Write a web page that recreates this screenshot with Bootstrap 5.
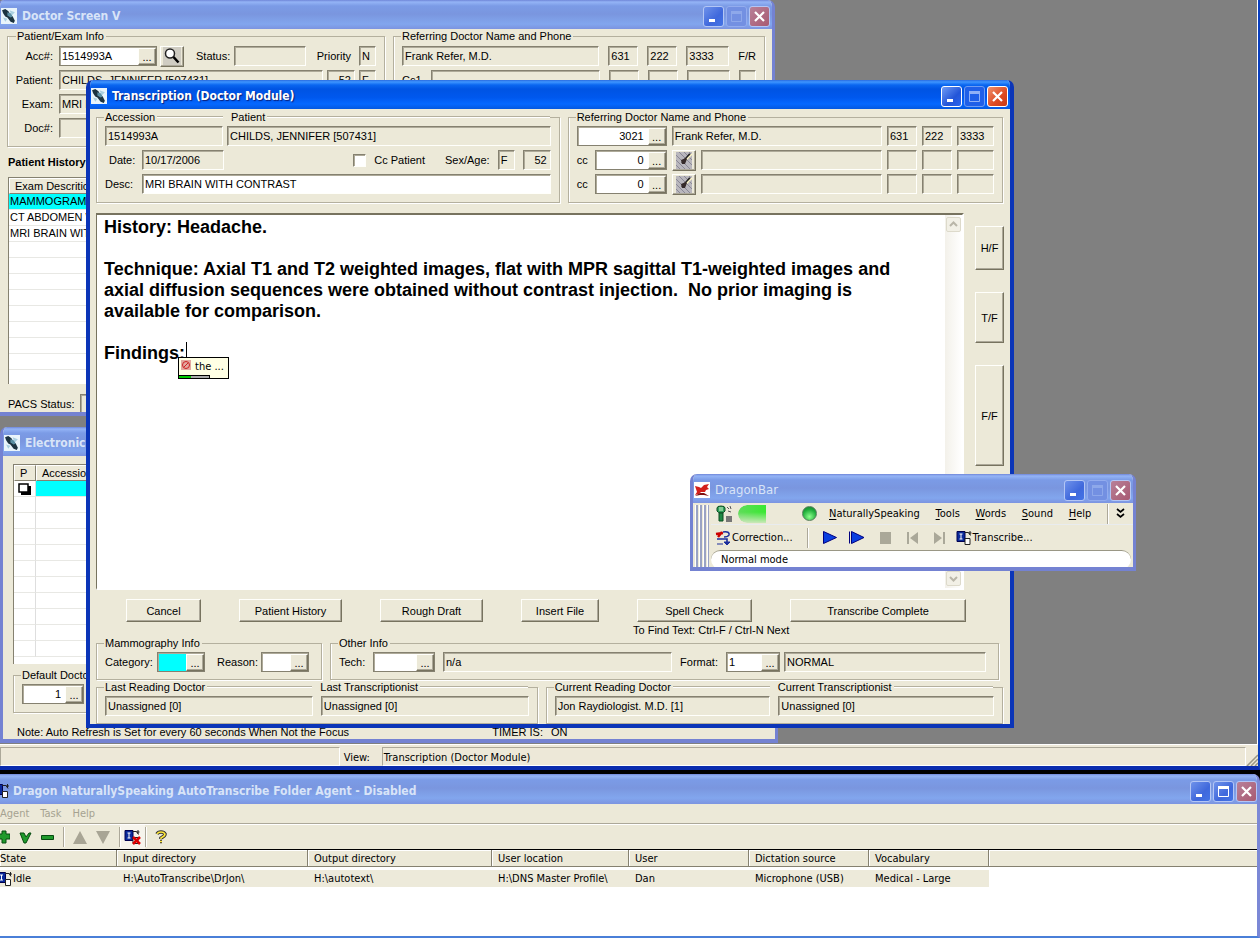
<!DOCTYPE html>
<html lang="en">
<head>
<meta charset="utf-8">
<meta name="viewport" content="width=device-width, initial-scale=1">
<title>Transcription (Doctor Module)</title>
<link rel="stylesheet" href="https://cdn.jsdelivr.net/npm/bootstrap@5.3.0/dist/css/bootstrap.min.css">
<style>
:root{--face:#ece9d8;--lo:#858170;--hi:#fffffb}
html,body{height:100%}
body{font:11px/14px "Liberation Sans",Arial,sans-serif;color:#000;background:#000;overflow:hidden;cursor:default}
.ui{font-family:"DejaVu Sans Condensed",Tahoma,sans-serif}
input,button,textarea{font:inherit;color:inherit;border-radius:0}
label{white-space:nowrap}
svg{display:block;flex:none}

/* windows */
.workspace{border-right:2px solid #0a3fc0;border-bottom:4px solid #0a2cae;margin-bottom:4px}
.mdi{background:#808080;border-right:1px solid #fff}
.win{position:absolute;background:var(--face);border:4px solid #0b35b8;border-top:0;border-radius:7px 7px 0 0;display:flex;flex-direction:column;overflow:hidden}
.win.idle{border-color:#7482d2;border-width:0 3px 4px}
.win-doctor{left:-3px;top:0;width:778px;height:416px}
.win-electronic{left:0;top:427px;width:778px;height:316px}
.win-transcription{left:86px;top:80px;width:928px;height:648px}
.win-dragon{left:690px;top:474px;width:446px;height:97px}
.tbar{height:29px;flex:none;margin:0 -4px;padding:3px 6px 0 5px;color:#fff;gap:5px;background:linear-gradient(#2a6be0 0,#3e95ff 2px,#0a66f0 5px,#0054e3 9px,#0058ee 60%,#0568ff 24px,#0458e0 100%)}
.idle>.tbar{color:#d8e4f8;background:linear-gradient(#6f86d8 0,#94b4f6 2px,#7b9be6 6px,#7a96df 14px,#82a6ee 24px,#7c94e0 100%)}
.tbar h2{font:bold 12px/18px "DejaVu Sans Condensed","Trebuchet MS",sans-serif;margin:0;flex:1;white-space:nowrap;text-shadow:1px 1px 1px #0a1f7a}
.idle>.tbar h2{text-shadow:none}
.win-dragon .tbar h2{font-size:13px;font-weight:400}
.cap{width:21px;height:21px;flex:none;padding:0;border:1px solid #fff;border-radius:3px;background:linear-gradient(135deg,#6f9bf5,#2355d8 60%,#2c66ee);display:grid;place-items:center;margin-left:-3px}
.cap.off{background:#1f5fe8;border-color:#6f9cf2}
.cap.close-x{background:linear-gradient(135deg,#f0906c,#dc4a22 60%,#c83a14)}
.idle .cap{border-color:#b3c6f5;background:linear-gradient(135deg,#6f92ea,#3f68dc 60%,#4474e6)}
.idle .cap.off{background:#7390e2;border-color:#93acee}
.idle .cap.close-x{background:linear-gradient(135deg,#b88098,#a85a72)}

/* controls */
.inp{height:20px;min-width:0;padding:0 3px 1px 2px;border:1px solid;border-color:var(--lo) var(--hi) var(--hi) var(--lo);box-shadow:inset 1px 1px #aeaa99;background:var(--face);outline:0}
.edit{background:#fff}
.cyan{background:#0ff}
.combo{display:flex;height:20px;border:1px solid;border-color:var(--lo);box-shadow:inset 1px 1px #aeaa99;background:#fff;padding:1px 0 0 1px}
.combo input{flex:1;min-width:0;border:0;padding:0 4px 2px 1px;background:transparent;outline:0}
.combo.cyan input{background:#0ff}
.raised{background:var(--face);border:1px solid;border-color:var(--hi) #77735f #77735f var(--hi);box-shadow:inset -1px -1px #aca899;padding:0}
.dots{width:18px;line-height:12px}
.push{height:23px}
.icon-btn{width:24px;height:21px;display:grid;place-items:center}
.grp{border:1px solid #b4b09e;box-shadow:inset 1px 0 #fff,1px 1px #fff;margin:0;padding:2px 8px 8px;min-width:0}
.grp legend{float:none;width:auto;font:inherit;line-height:14px;margin:0 0 0 -1px;padding:0 2px 0 1px;display:flex;align-items:center}
.grp legend.split{width:100%;padding:0 0 0 1px;gap:8px}
.split>span{display:flex;align-items:center}
.split>span.half{flex:1 1 0}
.rule{flex:1;height:2px;border-top:1px solid #b4b09e;border-bottom:1px solid #fff;margin-left:2px}
.rows{display:flex;flex-direction:column;gap:4px}
.line{display:flex;align-items:center;height:20px}
.near{gap:5px}
.apart{gap:9px}
.rt{text-align:right}
.w13{width:13px}.w17{width:17px}.w28{width:28px}.w30{width:30px}.w34{width:34px}.w37{width:37px}.w43{width:43px}.w48{width:48px}.w52{width:52px}.w54{width:54px}.w72{width:72px}
.w62{width:62px}.w82{width:82px}.w90{width:90px}.w98{width:98px}.w118{width:118px}
.tick{appearance:none;width:13px;height:13px;margin:0;background:#fff;border:1px solid;border-color:var(--lo) var(--hi) var(--hi) var(--lo);box-shadow:inset 1px 1px #aeaa99}

/* doctor and queue windows */
.doc-head{padding-left:7px;padding-right:7px}
.doc-head .grp{padding-top:3px}
.patient-box{flex:0 0 378px;padding-left:4px}
.doc-head .combo+button{margin-left:3px}
.tag{width:47px;padding-right:6px;text-align:right}
.exams{height:209px}
.queue{padding:8px 8px 0 10px}
.timer{width:224px}

/* transcription window */
.trans{padding:1px 7px 0 6px;display:flex;flex-direction:column;flex:1}
.accession-box{flex:1 1 0}
.referring-box{flex:0 0 48%}
.report{margin-top:10px}
.editor{position:relative;height:377px;flex:1;display:flex;border:2px solid;border-color:#77735f #fff #fff #77735f;border-left-width:1px;background:#fff}
.editor textarea{flex:1;border:0;outline:0;resize:none;overflow:hidden;padding:2px 7px;font:bold 18px/21px "Liberation Sans",Arial,sans-serif;white-space:pre-wrap}
.scroll{width:17px;background:linear-gradient(90deg,#f3f1ea,#fff);display:flex;flex-direction:column;justify-content:space-between;align-items:center;padding:2px 0}
.scroll button{width:15px;height:15px;padding:0;border:1px solid #dddacb;background:#f2f0e6;border-radius:2px;display:grid;place-items:center}
.caret{position:absolute;left:89px;top:127px;width:1px;height:17px;background:#000}
.hint{position:absolute;left:81px;top:142px;width:51px;height:22px;background:#ffffe4;border:1px solid #000;display:flex;gap:4px;padding:2px 0 0 2px}
.hint progress{position:absolute;left:-1px;bottom:-1px;width:32px;height:4px;border:1px solid #000;appearance:none;background:#aaa}
.hint progress::-webkit-progress-bar{background:#aaa}
.hint progress::-webkit-progress-value{background:#0c0}
.side{width:39px;padding:13px 0 0 11px;display:flex;flex-direction:column;gap:22px}
.side .raised{width:29px}
.hf{height:44px}.tf{height:51px}.ff{height:101px}
.cmds{display:grid;grid-template-columns:75px 103px 103px 78px 115px 176px;column-gap:38px;padding:9px 0 0 30px}
.find{grid-column:5/7;margin:0 0 -3px -4px;line-height:17px}
.lower .grp{padding-bottom:7px}
.last-box{flex:27 1 0}
.current-box{flex:28 1 0}
.fmt{width:202px}

/* lists */
.grid{background:#fff;border-top:1px solid var(--lo);border-left:1px solid var(--lo)}
.grid table,.agent table{border-collapse:separate;border-spacing:0;width:100%;table-layout:fixed}
.grid th{font-weight:400;height:16px;background:var(--face);border:1px solid;border-color:#fff #858170 #858170 #fff;padding:0 0 0 5px;line-height:14px}
.grid td{height:16px;border-bottom:1px solid #e8e8e4;border-right:1px solid #dedede;padding:0 1px;line-height:15px;white-space:nowrap}

/* DragonBar */
.grip{width:14px;flex:none;margin:2px 2px;background:repeating-linear-gradient(90deg,#fff 0 1px,#9aa3c4 1px 3px,var(--face) 3px 4px)}
.dmenu{height:22px}
.dtools{height:25px;gap:10px}
.dmenu a,.amenu a{color:inherit;text-decoration:none}
.dmenu u{text-underline-offset:2px}
.level{width:60px;height:18px;border-radius:9px 0 9px 9px;background:linear-gradient(90deg,#5fdc5a,#3ae832 28px,transparent 28px);mask-image:linear-gradient(#000 40%,#0003)}
.lamp{width:15px;height:15px;border-radius:50%;background:radial-gradient(circle at 50% 75%,#8dff8d,#1fae3a 60%,#157a30);border:1px solid #567f5c}
.flat{border:0;background:none;padding:0;display:flex;align-items:center}
.mode{height:19px;border:0;border-top:1px solid #9a9785;border-radius:10px;padding:0 10px 2px;background:#fff;margin-right:2px;outline:0}

/* status bar and folder agent */
.status{height:22px;flex:none;background:#ede8d8;border-top:1px solid #fff;padding-top:2px}
.pane{height:19px;border:1px solid;border-color:#aca899 #fff #fff #aca899;padding:3px 1px 0}
.pane-a{flex:0 0 27%}
.agent{position:relative;flex:none;height:164px;background:#fff;border-bottom:2px solid #4a7fd8;border-right:3px solid #7b88d6;border-radius:0 7px 0 0;overflow:hidden}
.agent>.tbar{height:30px;margin:0 -3px 0 0;padding:4px 3px 0 0;gap:3px;color:#d8e4f8}
.agent .caps{gap:2px}
.agent .cap{margin-left:0}
.amenu{height:20px;background:var(--face);color:#a5a291;border-bottom:1px solid #aca899;gap:11px}
.tools{height:26px;background:var(--face);border-top:1px solid #fff;border-bottom:1px solid #000}
.sep{width:1px;height:20px;background:#aca899;box-shadow:1px 0 #fff}
.agent th{font-weight:400;height:17px;background:var(--face);border-bottom:1px solid #858170;border-right:1px solid #858170;box-shadow:inset 1px 1px #fff;padding:1px 6px 0;line-height:15px}
.agent td{height:17px;background:#edeada;padding:0 6px;white-space:nowrap}
.agent tbody::before{content:"";display:block;height:3px}
.agent tr>*:first-child{padding-left:0}
.agent th:last-child{border-right:0}
.agent td:last-child{background:#fff}
</style>
</head>
<body class="d-flex flex-column">

<svg width="0" height="0" class="position-absolute" aria-hidden="true">
  <symbol id="app" viewBox="0 0 15 15"><path fill="#e9f4fb" d="M0 0h15v15H0z"/><path fill="#a9cfe0" d="M8 2l5 2-3 3zM2 9l4 1-2 3z"/><path d="M1 2l3-1 3 2 1 2 3 3 2 4-1 2-3-1-3-4-2-1-2-3z" fill="#1c3340"/><path d="M6 4l3 1 2 3-2 1-3-2z" fill="#5a8ea2"/></symbol>
  <symbol id="min" viewBox="0 0 15 15"><path d="M3 10h6v3H3z" fill="#fff"/></symbol>
  <symbol id="max" viewBox="0 0 15 15"><path d="M2.500 4h10v8.500h-10z" fill="none" stroke="currentColor"/><path d="M2 2h11v3H2z" fill="currentColor"/></symbol>
  <symbol id="cls" viewBox="0 0 15 15"><path d="M3 3l9 9M12 3l-9 9" stroke="#fff" stroke-width="2.200"/></symbol>
  <symbol id="wand" viewBox="0 0 18 17"><path fill="#b9b7bd" d="M1 0h16v17H1z"/><path d="M1 3l14 14M1 8l9 9M1 13l4 4M4 0l13 13M9 0l8 8M14 0l3 3" stroke="#8a8896"/><path d="M7 11L15 2" stroke="#222" stroke-width="2"/><path d="M11 8l6-6" stroke="#fff8c8" stroke-width="1.500"/><path d="M6 8l5-2 1 1-2 5-3 0z" fill="#352a2a"/></symbol>
  <symbol id="book" viewBox="0 0 16 16"><path d="M.500 1.500h8v10h-8z" fill="#0a2a9a" stroke="#000050"/><path d="M3 4h3M3 9h3M4.500 4v5" stroke="#fff"/><path d="M8 2.500h4l2 3" fill="none" stroke="#222"/><path d="M12 3l3 0M13.500 1v4" stroke="#222"/><path d="M8.500 8.500h5v6h-5z" fill="#fff" stroke="#222"/></symbol>
  <symbol id="up" viewBox="0 0 13 13"><path d="M3 8l3.500-3.500L10 8" fill="none" stroke="#b9b6a8" stroke-width="2"/></symbol>
  <symbol id="down" viewBox="0 0 13 13"><path d="M3 5l3.500 3.500L10 5" fill="none" stroke="#b9b6a8" stroke-width="2"/></symbol>
</svg>

<main class="workspace flex-fill d-flex flex-column position-relative">
<div class="mdi flex-fill position-relative overflow-hidden">

  <!-- Doctor Screen -->
  <section class="win idle win-doctor">
    <header class="tbar d-flex align-items-center"><svg width="16" height="16"><use href="#app"/></svg><h2>Doctor Screen V</h2>
      <button class="cap" aria-label="Minimize"><svg width="15" height="15"><use href="#min"/></svg></button><button class="cap off" aria-label="Maximize"><svg width="15" height="15" color="#8ea8ea"><use href="#max"/></svg></button><button class="cap close-x" aria-label="Close"><svg width="15" height="15"><use href="#cls"/></svg></button>
    </header>
    <div class="doc-head d-flex gap-2">
      <fieldset class="grp patient-box"><legend class="ms-1">Patient/Exam Info</legend>
        <div class="rows">
          <div class="line"><label class="tag" for="acc">Acc#:</label><div class="combo w98"><input id="acc" value="1514993A"><button class="raised dots" aria-label="Browse accession">...</button></div>
            <button class="raised icon-btn" aria-label="Search"><svg width="18" height="18" viewBox="0 0 18 18"><path fill="#cfccc2" d="M0 0h18v18H0z"/><circle cx="7" cy="6.500" r="4.500" fill="#fff" stroke="#222" stroke-width="1.500"/><path d="M10.500 10l5 5.500" stroke="#000" stroke-width="2.500"/></svg></button>
            <label class="ms-2 ps-1" for="st">Status:</label><input id="st" class="inp w72 ms-1" readonly><label class="ms-auto pe-1" for="pr">Priority</label><input id="pr" class="inp w17 ms-1" value="N" readonly></div>
          <div class="line"><label class="tag" for="pt">Patient:</label><input id="pt" class="inp flex-fill" value="CHILDS, JENNIFER [507431]" readonly><input class="inp w28 rt ms-1" value="52" aria-label="Age" readonly><input class="inp w17 ms-1" value="F" aria-label="Sex" readonly></div>
          <div class="line"><label class="tag" for="ex">Exam:</label><input id="ex" class="inp flex-fill" value="MRI BRAIN WITH CONTRAST" readonly></div>
          <div class="line"><label class="tag" for="dc">Doc#:</label><input id="dc" class="inp flex-fill" readonly></div>
        </div>
      </fieldset>
      <fieldset class="grp flex-fill"><legend>Referring Doctor Name and Phone</legend>
        <div class="rows">
          <div class="line apart"><input class="inp w-auto flex-fill" value="Frank Refer, M.D." aria-label="Doctor" readonly><input class="inp w30" value="631" aria-label="Area" readonly><input class="inp w30" value="222" aria-label="Exchange" readonly><input class="inp w43" value="3333" aria-label="Number" readonly><span>F/R</span></div>
          <div class="line apart"><label for="cc1">Cc1</label><input id="cc1" class="inp w-auto flex-fill" readonly><input class="inp w30" aria-label="Cc area" readonly><input class="inp w30" aria-label="Cc exchange" readonly><input class="inp w43" aria-label="Cc number" readonly><input class="inp w17" aria-label="Cc F/R" readonly></div>
        </div>
      </fieldset>
    </div>
    <div class="ps-2 pt-2 fw-bold">Patient History</div>
    <div class="grid exams ms-2 mt-2">
      <table><thead><tr><th>Exam Descrition</th></tr></thead>
      <tbody><tr><td class="cyan">MAMMOGRAM</td></tr><tr><td>CT ABDOMEN WITH</td></tr><tr><td>MRI BRAIN WITH CONTRAST</td></tr><tr><td></td></tr><tr><td></td></tr><tr><td></td></tr><tr><td></td></tr><tr><td></td></tr><tr><td></td></tr><tr><td></td></tr><tr><td></td></tr></tbody></table>
    </div>
    <div class="line ps-2 mt-2 pt-1"><label class="w72" for="pacs">PACS Status:</label><input id="pacs" class="inp" readonly></div>
  </section>

  <!-- Electronic queue -->
  <section class="win idle win-electronic">
    <header class="tbar d-flex align-items-center"><svg width="16" height="16"><use href="#app"/></svg><h2>Electronic Signature</h2></header>
    <div class="queue d-flex flex-column flex-fill">
      <div class="grid flex-fill">
        <table><colgroup><col width="22"><col></colgroup><thead><tr><th>P</th><th>Accession</th></tr></thead>
        <tbody><tr><td><svg class="mx-auto" width="13" height="12"><path d="M3 3h10v9H3z"/><path d="M1 1h9v8H1z" fill="#fff" stroke="#000" stroke-width="1.500"/></svg></td><td class="cyan"></td></tr><tr><td></td><td></td></tr><tr><td></td><td></td></tr><tr><td></td><td></td></tr><tr><td></td><td></td></tr><tr><td></td><td></td></tr><tr><td></td><td></td></tr><tr><td></td><td></td></tr><tr><td></td><td></td></tr><tr><td></td><td></td></tr><tr><td></td><td></td></tr></tbody></table>
      </div>
      <fieldset class="grp w-25 mt-1"><legend>Default Doctor</legend><div class="line"><div class="combo w62"><input class="rt" value="1" aria-label="Default doctor"><button class="raised dots" aria-label="Browse doctors">...</button></div></div></fieldset>
      <div class="d-flex pt-1 mt-2 ps-1"><span class="flex-fill">Note: Auto Refresh is Set for every 60 seconds When Not the Focus</span><span>TIMER IS:</span><span class="timer ps-2">ON</span></div>
    </div>
  </section>

  <!-- Transcription -->
  <section class="win win-transcription">
    <header class="tbar d-flex align-items-center"><svg width="16" height="16"><use href="#app"/></svg><h2>Transcription (Doctor Module)</h2>
      <button class="cap" aria-label="Minimize"><svg width="15" height="15"><use href="#min"/></svg></button><button class="cap off" aria-label="Maximize"><svg width="15" height="15" color="#8fb0f6"><use href="#max"/></svg></button><button class="cap close-x" aria-label="Close"><svg width="15" height="15"><use href="#cls"/></svg></button>
    </header>
    <div class="trans">
      <div class="d-flex gap-2">
        <fieldset class="grp accession-box"><legend class="split"><span class="w118">Accession<i class="rule"></i></span><span class="flex-fill">Patient<i class="rule"></i></span></legend>
          <div class="rows">
            <div class="line gap-1"><input class="inp w118" value="1514993A" aria-label="Accession" readonly><input class="inp flex-fill" value="CHILDS, JENNIFER [507431]" aria-label="Patient" readonly></div>
            <div class="line"><label class="w37 ps-1" for="dt">Date:</label><input id="dt" class="inp w82" value="10/17/2006" readonly><input type="checkbox" class="tick ms-auto" id="ccp"><label class="ps-2" for="ccp">Cc Patient</label><label class="ps-3 ms-1" for="sx">Sex/Age:</label><input id="sx" class="inp w17 ms-2" value="F" readonly><input class="inp w28 rt ms-2" value="52" aria-label="Age" readonly></div>
            <div class="line"><label class="w37" for="ds">Desc:</label><input id="ds" class="inp edit flex-fill" value="MRI BRAIN WITH CONTRAST"></div>
          </div>
        </fieldset>
        <fieldset class="grp referring-box"><legend>Referring Doctor Name and Phone</legend>
          <div class="rows">
            <div class="line near"><div class="combo w90"><input class="rt" value="3021" aria-label="Doctor number"><button class="raised dots" aria-label="Browse">...</button></div><input class="inp flex-fill" value="Frank Refer, M.D." aria-label="Doctor name" readonly><input class="inp w30" value="631" aria-label="Area" readonly><input class="inp w30" value="222" aria-label="Exchange" readonly><input class="inp w37" value="3333" aria-label="Number" readonly></div>
            <div class="line near"><label class="w13" for="c1">cc</label><div class="combo w72"><input id="c1" class="rt" value="0"><button class="raised dots" aria-label="Browse">...</button></div><button class="raised icon-btn" aria-label="Clear"><svg width="18" height="17"><use href="#wand"/></svg></button><input class="inp flex-fill" aria-label="Copy name" readonly><input class="inp w30" aria-label="Area" readonly><input class="inp w30" aria-label="Exchange" readonly><input class="inp w37" aria-label="Number" readonly></div>
            <div class="line near"><label class="w13" for="c2">cc</label><div class="combo w72"><input id="c2" class="rt" value="0"><button class="raised dots" aria-label="Browse">...</button></div><button class="raised icon-btn" aria-label="Clear"><svg width="18" height="17"><use href="#wand"/></svg></button><input class="inp flex-fill" aria-label="Copy name" readonly><input class="inp w30" aria-label="Area" readonly><input class="inp w30" aria-label="Exchange" readonly><input class="inp w37" aria-label="Number" readonly></div>
          </div>
        </fieldset>
      </div>

      <div class="d-flex report">
        <div class="editor">
          <textarea aria-label="Report" spellcheck="false">History: Headache.

Technique: Axial T1 and T2 weighted images, flat with MPR sagittal T1-weighted images and
axial diffusion sequences were obtained without contrast injection.  No prior imaging is
available for comparison.

Findings:</textarea>
          <div class="scroll"><button aria-label="Scroll up"><svg width="13" height="13"><use href="#up"/></svg></button><button aria-label="Scroll down"><svg width="13" height="13"><use href="#down"/></svg></button></div>
          <i class="caret"></i>
          <div class="hint ui"><svg width="10" height="10"><path fill="#e4a8a0" d="M0 0h10v10H0z"/><circle cx="5" cy="5" r="3.500" fill="none" stroke="#c22"/><path d="M3 7l4-4" stroke="#c22"/></svg><span>the ...</span><progress value="40" max="100"></progress></div>
        </div>
        <div class="side"><button class="raised hf">H/F</button><button class="raised tf">T/F</button><button class="raised ff">F/F</button></div>
      </div>

      <div class="cmds">
        <button class="raised push">Cancel</button><button class="raised push">Patient History</button><button class="raised push">Rough Draft</button><button class="raised push">Insert File</button><button class="raised push">Spell Check</button><button class="raised push">Transcribe Complete</button>
        <span class="find">To Find Text: Ctrl-F / Ctrl-N Next</span>
      </div>

      <div class="d-flex gap-2 me-1 lower">
        <fieldset class="grp"><legend>Mammography Info</legend><div class="line"><label class="w52" for="cat">Category:</label><div class="combo cyan w48"><input id="cat"><button class="raised dots" aria-label="Browse">...</button></div><label class="w48 ms-2 ps-1" for="rs">Reason:</label><div class="combo w48 me-1"><input id="rs"><button class="raised dots" aria-label="Browse">...</button></div></div></fieldset>
        <fieldset class="grp flex-fill"><legend>Other Info</legend><div class="line"><label class="w34" for="tc">Tech:</label><div class="combo w62"><input id="tc"><button class="raised dots" aria-label="Browse">...</button></div><input class="inp flex-fill mx-2" value="n/a" aria-label="Tech name" readonly><label for="fm">Format:</label><div class="combo w54 ms-2 me-1"><input id="fm" value="1"><button class="raised dots" aria-label="Browse">...</button></div><input class="inp fmt me-1" value="NORMAL" aria-label="Format name" readonly></div></fieldset>
      </div>
      <div class="d-flex gap-2 lower">
        <fieldset class="grp last-box"><legend class="split"><span class="half">Last Reading Doctor<i class="rule"></i></span><span class="half">Last Transcriptionist<i class="rule"></i></span></legend><div class="line gap-2"><input class="inp flex-fill w-50" value="Unassigned [0]" aria-label="Last reading doctor" readonly><input class="inp flex-fill w-50" value="Unassigned [0]" aria-label="Last transcriptionist" readonly></div></fieldset>
        <fieldset class="grp current-box"><legend class="split"><span class="half">Current Reading Doctor<i class="rule"></i></span><span class="half">Current Transcriptionist<i class="rule"></i></span></legend><div class="line gap-2"><input class="inp flex-fill w-50" value="Jon Raydiologist. M.D. [1]" aria-label="Current reading doctor" readonly><input class="inp flex-fill w-50" value="Unassigned [0]" aria-label="Current transcriptionist" readonly></div></fieldset>
      </div>
    </div>
  </section>

  <!-- DragonBar -->
  <section class="win idle win-dragon ui">
    <header class="tbar d-flex align-items-center"><svg width="16" height="16" viewBox="0 0 16 16"><path fill="#fff" d="M0 0h16v16H0z"/><path d="M1 4l4 1 2 1 3-3 5-1-2 3 2 2-3 1-1 2-4 0-2 2-4 1 2-3-1-3z" fill="#d3201c"/><path d="M1 14l5-3 4 0 5 3-5-1-4 0z" fill="#801010"/></svg><h2>DragonBar</h2>
      <button class="cap" aria-label="Minimize"><svg width="15" height="15"><use href="#min"/></svg></button><button class="cap off" aria-label="Maximize"><svg width="15" height="15" color="#8ea8ea"><use href="#max"/></svg></button><button class="cap close-x" aria-label="Close"><svg width="15" height="15"><use href="#cls"/></svg></button>
    </header>
    <div class="d-flex flex-fill">
      <div class="grip"></div>
      <div class="flex-fill d-flex flex-column">
        <nav class="dmenu d-flex align-items-center ps-1 border-bottom border-secondary-subtle">
          <svg width="19" height="18" viewBox="0 0 19 18"><path d="M2 3q0-2 4-2t4 2v3q-1 2-4 2t-4-2z" fill="#2fa05a" stroke="#0a4a20"/><path d="M4 8h4v8H4z" fill="#1f8a45" stroke="#0a4a20"/><path d="M4 3h4M4 5h4" stroke="#d7f7d0"/><path d="M12 2l2 2M15 1l1 3M13 6l3 1" stroke="#555"/><path d="M11 11h6v6h-6z" fill="#777"/></svg>
          <span class="level ms-1"></span><span class="lamp mx-1"></span>
          <div class="d-flex flex-fill justify-content-between align-items-center ps-2"><a href="#"><u>N</u>aturallySpeaking</a><a href="#"><u>T</u>ools</a><a href="#"><u>W</u>ords</a><a href="#"><u>S</u>ound</a><a href="#"><u>H</u>elp</a><i class="sep"></i></div>
          <button class="flat px-2" aria-label="More"><svg width="9" height="11"><path d="M1 1l3.500 3L8 1M1 6l3.500 3L8 6" fill="none" stroke="#000" stroke-width="1.700"/></svg></button>
        </nav>
        <div class="dtools d-flex align-items-center ps-1">
          <button class="flat"><svg width="17" height="16" viewBox="0 0 17 16"><path d="M1 4l7-1M3 7l4-5" stroke="#c00" stroke-width="2.500"/><path d="M8 2q7-1 6 3-1 2-5 2M2 9h10v5" fill="none" stroke="#1c2f9c" stroke-width="1.600"/><path d="M9 12h6l-3 3zM2 14h6" fill="#1c2f9c" stroke="#1c2f9c"/></svg>Correction...</button>
          <i class="sep mx-1"></i>
          <button class="flat" aria-label="Play"><svg width="16" height="15"><path d="M1.500 1.500L14.500 7.500 1.500 13.500z" fill="#0a3fe0" stroke="#000080"/></svg></button>
          <button class="flat" aria-label="Play from start"><svg width="17" height="15"><path d="M1.500 1.500v12M3.500 1.500L16 7.500 3.500 13.500z" fill="#0a3fe0" stroke="#000080"/></svg></button>
          <button class="flat ms-1" aria-label="Stop"><svg width="13" height="13"><path fill="#aaa899" d="M1 1h11v12H1z"/></svg></button>
          <button class="flat ms-1" aria-label="Back"><svg width="13" height="14"><path fill="#aaa899" d="M1 1h2v12H1zM12 1v12L4 7z"/></svg></button>
          <button class="flat ms-1" aria-label="Forward"><svg width="13" height="14"><path fill="#aaa899" d="M10 1h2v12h-2zM1 1v12l8-6z"/></svg></button>
          <button class="flat"><svg width="17" height="16"><use href="#book"/></svg>Transcribe...</button>
        </div>
        <input class="mode" value="Normal mode" aria-label="Mode" readonly>
      </div>
    </div>
  </section>
</div>

<footer class="status d-flex align-items-start ui">
  <div class="pane pane-a"></div><span class="px-1 pt-1">View:</span><div class="pane flex-fill ms-2">Transcription (Doctor Module)</div>
  <svg class="align-self-end" width="12" height="12"><path d="M1 12L12 1M5 12l7-7M9 12l3-3" stroke="#9a9785" stroke-width="1.500"/></svg>
</footer>
</main>

<!-- AutoTranscribe agent -->
<section class="agent idle ui">
  <header class="tbar d-flex align-items-center"><svg width="10" height="16" viewBox="6 0 10 16"><use href="#book" width="16" height="16"/></svg><h2>Dragon NaturallySpeaking AutoTranscribe Folder Agent - Disabled</h2>
    <div class="d-flex caps"><button class="cap" aria-label="Minimize"><svg width="15" height="15"><use href="#min"/></svg></button><button class="cap" aria-label="Maximize"><svg width="15" height="15" color="#fff"><use href="#max"/></svg></button><button class="cap close-x" aria-label="Close"><svg width="15" height="15"><use href="#cls"/></svg></button></div>
  </header>
  <nav class="amenu d-flex align-items-center"><a href="#">Agent</a><a href="#">Task</a><a href="#">Help</a></nav>
  <div class="tools apart d-flex align-items-center">
    <button class="flat" aria-label="Add"><svg width="10" height="14"><path d="M-2 4h4V1h4v3h4v5H6v4H2V9h-4z" fill="#1f9a2c" stroke="#064a10"/></svg></button>
    <button class="flat" aria-label="Check"><svg width="13" height="13"><path d="M1 2h4l2 4 3-4h2L7 12H5z" fill="#1f9a2c" stroke="#064a10"/></svg></button>
    <button class="flat" aria-label="Remove"><svg width="13" height="12"><path d="M.500 4.500h12v4H.500z" fill="#1f9a2c" stroke="#064a10"/></svg></button>
    <i class="sep"></i>
    <button class="flat" aria-label="Up"><svg width="14" height="13"><path d="M7 0l7 13H0z" fill="#a8a595"/></svg></button>
    <button class="flat" aria-label="Down"><svg width="14" height="13"><path d="M7 13l7-13H0z" fill="#a8a595"/></svg></button>
    <div class="d-flex align-items-center">
      <i class="sep"></i>
      <button class="flat bg-white bg-opacity-50 p-1" aria-label="Disable"><svg width="17" height="16"><use href="#book"/><path d="M9 8l7 7M16 8l-7 7" stroke="#d00" stroke-width="2.500"/></svg></button>
      <i class="sep"></i>
    </div>
    <button class="flat" aria-label="Help"><svg width="12" height="14"><path d="M2 4q1-2 4-2t4 2q0 2-4 4v1M5 11.500h2" fill="none" stroke="#333" stroke-width="3.600"/><path d="M2 4q1-2 4-2t4 2q0 2-4 4v1M5 11.500h2" fill="none" stroke="#ffe83a" stroke-width="1.600"/></svg></button>
  </div>
  <table>
    <colgroup><col width="117"><col width="191"><col width="184"><col width="137"><col width="120"><col width="120"><col width="120"><col></colgroup>
    <thead><tr><th>State</th><th>Input directory</th><th>Output directory</th><th>User location</th><th>User</th><th>Dictation source</th><th>Vocabulary</th><th></th></tr></thead>
    <tbody><tr><td><span class="d-flex align-items-center"><svg width="13" height="16" viewBox="3 0 13 16"><use href="#book" width="16" height="16"/></svg>Idle</span></td><td>H:\AutoTranscribe\DrJon\</td><td>H:\autotext\</td><td>H:\DNS Master Profile\</td><td>Dan</td><td>Microphone (USB)</td><td>Medical - Large</td><td></td></tr></tbody>
  </table>
</section>

<script src="https://cdn.jsdelivr.net/npm/bootstrap@5.3.0/dist/js/bootstrap.bundle.min.js"></script>
</body>
</html>
